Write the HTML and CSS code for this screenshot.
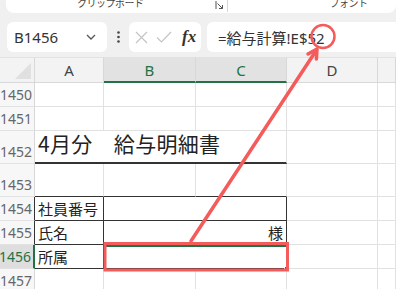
FILE: index.html
```html
<!DOCTYPE html>
<html lang="ja">
  <head>
    <meta charset="UTF-8" />
    <title>給与明細書</title>
    <link rel="stylesheet" href="styles.css">
  </head>
  <body>
    <!-- リボン（下端だけ見えている） -->
    <div class="ribbon">
      <div class="ribbon-panel">
        <span class="group-label clipboard">クリップボード</span>
        <svg class="launcher" width="9" height="9" viewBox="0 0 9 9">
          <path d="M1 0 V8 M2.5 2.5 L7.5 7.5 M4 7.5 H7.5 V4" fill="none" stroke="#555" stroke-width="1"/>
        </svg>
        <span class="group-sep"></span>
        <span class="group-label font-group">フォント</span>
      </div>
    </div>

    <!-- 数式バー -->
    <div class="formula-bar">
      <div class="name-box">
        <span>B1456</span>
        <svg width="10" height="6" viewBox="0 0 10 6">
          <path d="M1 1 L5 5 L9 1" fill="none" stroke="#555" stroke-width="1.3"/>
        </svg>
      </div>
      <div class="dots">
        <svg width="3" height="12" viewBox="0 0 3 12">
          <circle cx="1.5" cy="1.5" r="1.3" fill="#444"/>
          <circle cx="1.5" cy="6" r="1.3" fill="#444"/>
          <circle cx="1.5" cy="10.5" r="1.3" fill="#444"/>
        </svg>
      </div>
      <div class="fx-box">
        <svg width="13" height="13" viewBox="0 0 13 13">
          <path d="M1 1 L12 12 M12 1 L1 12" stroke="#c4c4c4" stroke-width="1.2"/>
        </svg>
        <svg width="16" height="12" viewBox="0 0 16 12">
          <path d="M1 6.5 L5.5 11 L15 1" fill="none" stroke="#c4c4c4" stroke-width="1.2"/>
        </svg>
        <span class="fx">fx</span>
      </div>
      <div class="formula">=給与計算!E$52</div>
    </div>

    <!-- シート -->
    <div class="sheet">
      <div class="corner"></div>
      <div class="col-head">A</div>
      <div class="col-head selected">B</div>
      <div class="col-head selected">C</div>
      <div class="col-head">D</div>
      <div class="col-head"></div>

      <div class="row-head">1450</div>
      <div class="cell"></div><div class="cell"></div><div class="cell"></div><div class="cell"></div><div class="cell"></div>

      <div class="row-head">1451</div>
      <div class="cell"></div><div class="cell"></div><div class="cell"></div><div class="cell"></div><div class="cell"></div>

      <div class="row-head">1452</div>
      <div class="cell title">4月分　給与明細書</div>
      <div class="cell"></div><div class="cell"></div>

      <div class="row-head">1453</div>
      <div class="cell line-below"></div><div class="cell line-below"></div><div class="cell line-below"></div><div class="cell"></div><div class="cell"></div>

      <div class="row-head box-edge">1454</div>
      <div class="cell box">社員番号</div>
      <div class="cell box wide"></div>
      <div class="cell"></div><div class="cell"></div>

      <div class="row-head box-edge">1455</div>
      <div class="cell box">氏名</div>
      <div class="cell box wide right">様</div>
      <div class="cell"></div><div class="cell"></div>

      <div class="row-head active">1456</div>
      <div class="cell box">所属</div>
      <div class="cell box wide current"><span class="fill-handle"></span></div>
      <div class="cell"></div><div class="cell"></div>

      <div class="row-head">1457</div>
      <div class="cell"></div><div class="cell"></div><div class="cell"></div><div class="cell"></div><div class="cell"></div>
    </div>

    <!-- 赤い注釈 -->
    <svg class="annotations" width="396" height="289" viewBox="0 0 396 289">
      <circle cx="323" cy="36.5" r="11.5" fill="none" stroke="#f45b5b" stroke-width="2.5"/>
      <path d="M191 241 L316.5 50" fill="none" stroke="#f45b5b" stroke-width="3.5" stroke-linecap="round"/>
      <path d="M308 54 L317 49 L316.4 59" fill="none" stroke="#f45b5b" stroke-width="3.5" stroke-linecap="round" stroke-linejoin="round"/>
      <rect x="105" y="243.5" width="182.5" height="26.5" fill="none" stroke="#f45b5b" stroke-width="3"/>
    </svg>
  </body>
</html>
```

FILE: styles.css
```css
* {
  box-sizing: border-box;
}

body {
  margin: 0;
  width: 396px;
  height: 289px;
  overflow: hidden;
  position: relative;
  background: #f0f0f0;
  font-family: "Noto Sans", "Noto Sans CJK JP", sans-serif;
  color: #222;
}

/* リボン */
.ribbon {
  height: 13px;
  padding-left: 6px;
}

.ribbon-panel {
  height: 13px;
  background: #fff;
  border-radius: 0 0 8px 8px;
  display: flex;
  align-items: flex-start;
  overflow: hidden;
  font-family: "Noto Sans CJK JP", sans-serif;
  font-size: 10px;
  line-height: 12px;
  color: #444;
}

.group-label {
  margin-top: -3px;
  letter-spacing: -0.5px;
}

.clipboard {
  margin-left: 71px;
}

.launcher {
  margin-left: 71px;
  margin-top: 1px;
}

.group-sep {
  width: 1px;
  height: 12px;
  margin-left: 3px;
  background: #d6d6d6;
}

.font-group {
  margin-left: 102px;
}

/* 数式バー */
.formula-bar {
  height: 44px;
  padding-top: 9px;
  display: flex;
  align-items: flex-start;
}

.name-box {
  width: 100px;
  height: 30px;
  margin-left: 7px;
  padding: 0 11px 0 7px;
  background: #fff;
  border-radius: 6px;
  display: flex;
  align-items: center;
  justify-content: space-between;
  font-size: 15px;
  color: #333;
}

.dots {
  width: 22px;
  height: 30px;
  display: flex;
  align-items: center;
  justify-content: center;
}

.fx-box {
  width: 72px;
  height: 30px;
  margin-right: 6px;
  padding: 0 4px 0 6px;
  background: #fff;
  border-radius: 6px;
  display: flex;
  align-items: center;
  gap: 8px;
}

.fx {
  font-family: "Liberation Serif", serif;
  font-style: italic;
  font-weight: bold;
  font-size: 17px;
  color: #333;
  margin-left: 2px;
}

.formula {
  flex: 1;
  height: 30px;
  margin-right: -10px;
  padding-left: 11px;
  background: #fff;
  border-radius: 6px;
  display: flex;
  align-items: center;
  font-size: 15px;
  color: #333;
}

/* シート */
.sheet {
  display: grid;
  grid-template-columns: 35px 69px 92px 91px 91px 1fr;
  grid-template-rows: 26px 24px 24px 33px 33px 24px 24px 24px 24px;
  background: #fff;
  font-family: "Noto Sans CJK JP", sans-serif;
}

.corner {
  position: relative;
  background: #f3f3f3;
  border-right: 1px solid #d8d8d8;
  border-bottom: 1px solid #d8d8d8;
  border-top: 1px solid #e2e2e2;
}

.corner::after {
  content: "";
  position: absolute;
  right: 3px;
  bottom: 3px;
  width: 16px;
  height: 16px;
  background: #e0e0e0;
  clip-path: polygon(100% 0, 100% 100%, 0 100%);
}

.col-head {
  background: #f3f3f3;
  border-right: 1px solid #d8d8d8;
  border-bottom: 1px solid #d8d8d8;
  border-top: 1px solid #e2e2e2;
  display: flex;
  align-items: center;
  justify-content: center;
  font-family: "Noto Sans", sans-serif;
  font-size: 15px;
  color: #444;
}

.col-head.selected {
  background: #e2e2e2;
  color: #217346;
  border-bottom: 2px solid #217346;
}

.row-head {
  background: #f7f7f7;
  border-right: 1px solid #d8d8d8;
  border-bottom: 1px solid #e2e2e2;
  display: flex;
  align-items: flex-end;
  justify-content: flex-end;
  padding: 0 2px 2px 0;
  font-family: "Noto Sans", sans-serif;
  font-size: 14px;
  line-height: 19px;
  color: #666;
}

.row-head.box-edge {
  border-right-color: #333;
}

.row-head.active {
  background: #dedede;
  color: #217346;
  border-right: 2px solid #217346;
}

.cell {
  border-right: 1px solid #e1e1e1;
  border-bottom: 1px solid #e1e1e1;
  padding: 0 3px;
  display: flex;
  align-items: center;
  font-size: 15px;
}

.title {
  grid-column: span 3;
  border-bottom: 2px solid #333;
  align-items: flex-end;
  padding-bottom: 4px;
  font-size: 21px;
  letter-spacing: 0.3px;
}

.line-below {
  border-bottom-color: #333;
}

.box {
  border-right-color: #333;
  border-bottom-color: #333;
}

.wide {
  grid-column: span 2;
}

.right {
  justify-content: flex-end;
}

.current {
  position: relative;
  box-shadow: inset 0 2px 0 #217346;
}

.fill-handle {
  position: absolute;
  right: -3px;
  bottom: -3px;
  width: 5px;
  height: 5px;
  background: #217346;
  border: 1px solid #fff;
}

/* 注釈 */
.annotations {
  position: absolute;
  left: 0;
  top: 0;
  pointer-events: none;
}
```
